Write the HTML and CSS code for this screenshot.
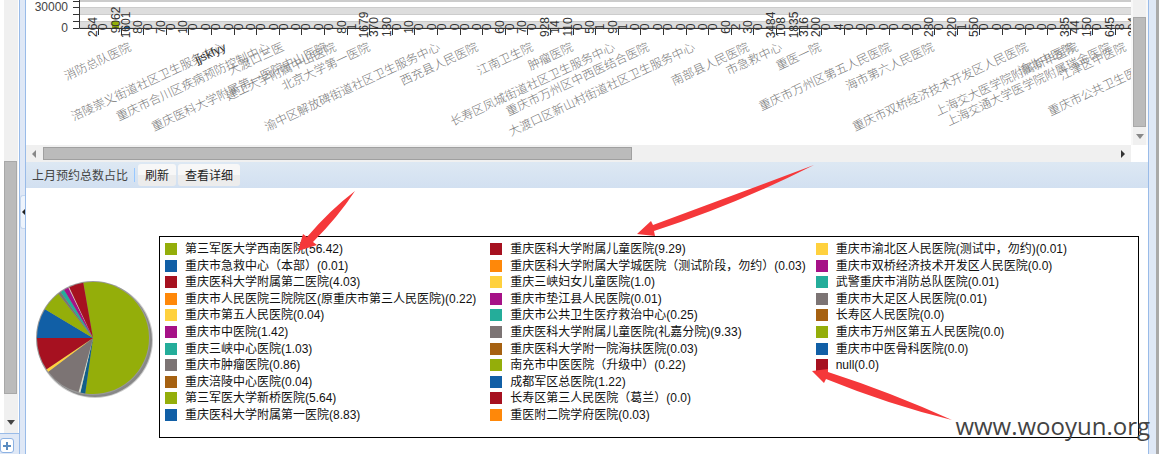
FILE: index.html
```html
<!DOCTYPE html>
<html lang="zh-CN">
<head>
<meta charset="utf-8">
<title>上月预约总数占比</title>
<link rel="stylesheet" href="styles.css">
</head>
<body>
<div class="app">
  <aside class="side">
    <div class="side-scroll">
      <div class="side-thumb"></div>
      <svg class="side-arrow" width="8" height="5"><path d="M0 0h8L4 5z" fill="#444"/></svg>
    </div>
    <div class="side-foot"><button class="plus" aria-label="展开"><svg width="8" height="8"><path d="M4 0v8M0 4h8" stroke="#5b8cc0" stroke-width="2"/></svg></button></div>
  </aside>
  <div class="splitter"><button class="collapse" aria-label="收起"><svg width="3" height="6"><path d="M3 0v6L0 3z" fill="#222"/></svg></button></div>
  <main class="main">
    <section class="chart-panel">
      <div class="chart-row">
        <div class="chart"><svg id="bars" class="bars" width="1105" height="145"></svg></div>
        <div class="vscroll">
          <div class="vthumb"></div>
          <svg width="8" height="5"><path d="M0 0h8L4 5z" fill="#888"/></svg>
        </div>
      </div>
      <div class="hscroll">
        <svg width="4" height="8"><path d="M4 0v8L0 4z" fill="#888"/></svg>
        <div class="htrack"><div class="hthumb"></div></div>
        <svg width="4" height="8"><path d="M0 0v8l4-4z" fill="#333"/></svg>
      </div>
    </section>
    <header class="toolbar">
      <span class="title">上月预约总数占比</span>
      <span class="sep"></span>
      <button class="btn">刷新</button>
      <button class="btn">查看详细</button>
    </header>
    <section class="pie-panel">
      <svg id="pie" class="pie" width="122" height="122" viewBox="-61 -61 122 122"></svg>
      <ul class="legend">
        <li class="green">第三军医大学西南医院(56.42)</li>
        <li class="blue">重庆市急救中心（本部）(0.01)</li>
        <li class="red">重庆医科大学附属第二医院(4.03)</li>
        <li class="orange">重庆市人民医院三院院区(原重庆市第三人民医院)(0.22)</li>
        <li class="yellow">重庆市第五人民医院(0.04)</li>
        <li class="purple">重庆市中医院(1.42)</li>
        <li class="teal">重庆三峡中心医院(1.03)</li>
        <li class="gray">重庆市肿瘤医院(0.86)</li>
        <li class="brown">重庆涪陵中心医院(0.04)</li>
        <li class="green">第三军医大学新桥医院(5.64)</li>
        <li class="blue">重庆医科大学附属第一医院(8.83)</li>
        <li class="red">重庆医科大学附属儿童医院(9.29)</li>
        <li class="orange">重庆医科大学附属大学城医院（测试阶段，勿约）(0.03)</li>
        <li class="yellow">重庆三峡妇女儿童医院(1.0)</li>
        <li class="purple">重庆市垫江县人民医院(0.01)</li>
        <li class="teal">重庆市公共卫生医疗救治中心(0.25)</li>
        <li class="gray">重庆医科大学附属儿童医院(礼嘉分院)(9.33)</li>
        <li class="brown">重庆医科大学附一院海扶医院(0.03)</li>
        <li class="green">南充市中医医院（升级中）(0.22)</li>
        <li class="blue">成都军区总医院(1.22)</li>
        <li class="red">长寿区第三人民医院（葛兰）(0.0)</li>
        <li class="orange">重医附二院学府医院(0.03)</li>
        <li class="yellow">重庆市渝北区人民医院(测试中，勿约)(0.01)</li>
        <li class="purple">重庆市双桥经济技术开发区人民医院(0.0)</li>
        <li class="teal">武警重庆市消防总队医院(0.01)</li>
        <li class="gray">重庆市大足区人民医院(0.01)</li>
        <li class="brown">长寿区人民医院(0.0)</li>
        <li class="green">重庆市万州区第五人民医院(0.0)</li>
        <li class="blue">重庆市中医骨科医院(0.0)</li>
        <li class="red">null(0.0)</li>
      </ul>
    </section>
  </main>
  <div class="edge"></div>
  <svg class="arrows" width="1159" height="454">
    <path d="M298 251L303 234L307 237Q330 210 355 191Q338 217 313 242L317 245Z"/>
    <path d="M637 234L651 221L653 225L814 165Q735 205 654 231L655 236Z"/>
    <path d="M812 371L828 369L828 372Q890 392 952 420Q890 405 826 379L824 383Z"/>
  </svg>
  <div class="watermark">www.wooyun.org</div>
</div>
<script src="chart.js"></script>
</body>
</html>
```

FILE: styles.css
```css
* { box-sizing: border-box; }
body {
  margin: 0;
  font: 12px/16px "Liberation Sans", "Noto Sans CJK SC", sans-serif;
  color: #000;
  background: #fff;
}
button { font: inherit; padding: 0; }
svg { display: block; }

.app { position: relative; display: flex; height: 100vh; overflow: hidden; }

.side { display: flex; flex-direction: column; width: 20px; flex: none; border-right: 1px solid #99bbe8; }
.side-scroll {
  flex: 1; width: 14px; margin-left: 4px; background: #f0f0f0;
  display: flex; flex-direction: column; align-items: center;
  padding: 161px 0 8px;
}
.side-thumb { flex: 1; align-self: stretch; width: 13px; background: #bbb; border: 1px solid #a8a8a8; }
.side-arrow { margin-top: 26px; }
.side-foot { height: 21px; border-top: 1px solid #99bbe8; background: #dfe8f6; padding-top: 4px; }
.plus {
  display: flex; align-items: center; justify-content: center;
  width: 14px; height: 15px; background: #fff; border: 1px solid #8db2e3; border-radius: 3px;
}

.splitter { width: 6px; flex: none; background: #dfe8f6; border-right: 1px solid #99bbe8; padding-top: 195px; }
.collapse {
  display: flex; align-items: center; justify-content: center;
  width: 5px; height: 34px; background: #eef4fc; border: solid #c4d6ee; border-width: 1px 0 1px 1px; border-radius: 3px 0 0 3px;
}

.main { flex: 1; min-width: 0; display: flex; flex-direction: column; }
.chart-row { display: flex; }
.chart { flex: 1; min-width: 0; overflow: hidden; }
.bars { font-size: 12px; }
.place { font-family: "Liberation Serif", "Noto Sans CJK SC", sans-serif; font-weight: 300; }
.vscroll {
  width: 17px; background: #f0f0f0; border-left: 2px solid #f8f8f8; border-right: 2px solid #f8f8f8;
  display: flex; flex-direction: column; align-items: center; padding: 17px 0 6px;
}
.vthumb { flex: 1; align-self: stretch; background: #bbb; border: 1px solid #a8a8a8; margin-bottom: 7px; }
.hscroll {
  height: 17px; margin-right: 17px; padding: 0 6px; background: #f0f0f0;
  display: flex; align-items: center; gap: 7px;
}
.htrack { flex: 1; }
.hthumb { width: 55%; height: 13px; background: #bbb; border: 1px solid #a0a0a0; }

.toolbar {
  display: flex; align-items: center; height: 26px; padding-left: 6px;
  background: linear-gradient(#dde8f3, #d2e0f1);
}
.title { color: #444; margin-right: 6px; padding-top: 2px; }
.sep { width: 1px; height: 14px; background: #98c8ff; margin-right: 3px; }
.btn {
  height: 22px; padding: 2px 7px 0; margin-right: 2px; color: #222;
  background: linear-gradient(#f7f7f7 50%, #ececec 50%); border: 0; border-radius: 3px;
}

.pie-panel { flex: 1; display: flex; align-items: flex-start; padding: 48px 9px 0 6px; }
.pie { flex: none; margin: 41px 5px 0 0; }
.legend {
  flex: 1; min-width: 0; margin: 0; padding: 4px 0 14px 5px; height: 202px; list-style: none;
  border: 1px solid #000;
  display: grid; grid-auto-flow: column; column-gap: 3px;
  grid-template-rows: repeat(11, 1fr); grid-template-columns: repeat(3, 1fr);
}
.legend li { display: flex; align-items: center; gap: 8px; min-width: 0; min-height: 0; white-space: nowrap; color: #111; }
.legend li::before { content: ""; width: 12px; height: 12px; background: currentColor; flex: none; }
.legend .green::before { color: #94ae0a; }
.legend .blue::before { color: #115fa6; }
.legend .red::before { color: #a61120; }
.legend .orange::before { color: #ff8809; }
.legend .yellow::before { color: #ffd13e; }
.legend .purple::before { color: #a61187; }
.legend .teal::before { color: #24ad9a; }
.legend .gray::before { color: #7c7474; }
.legend .brown::before { color: #a66111; }

.edge { width: 11px; flex: none; background: #dfe8f6; border-left: 1px solid #99bbe8; border-right: 3px solid #aaa; }
.arrows { position: absolute; left: 0; top: 0; fill: #f5383a; pointer-events: none; }
.watermark { position: absolute; right: 9px; bottom: 12px; font: 24px/32px "Open Sans", sans-serif; color: #444; }
```

FILE: chart.js
```js
const NS = 'http://www.w3.org/2000/svg';
function add(parent, name, attrs, text) {
  const el = document.createElementNS(NS, name);
  for (const key in attrs) el.setAttribute(key, attrs[key]);
  if (text !== undefined) el.textContent = text;
  parent.appendChild(el);
  return el;
}

// Bar chart
const bars = document.getElementById('bars');
for (const [y, h] of [[0, 2], [7, 8], [21, 7]]) {
  add(bars, 'rect', { x: 54, y: y, width: 1051, height: h, fill: '#ddd' });
  add(bars, 'rect', { x: 54, y: y + h - 1, width: 1051, height: 1, fill: '#ccc' });
  add(bars, 'rect', { x: 54, y: y, width: 1051, height: 1, fill: '#ccc' });
}
add(bars, 'rect', { x: 86, y: 21, width: 7, height: 7, fill: '#94ae0a' });
add(bars, 'rect', { x: 98, y: 27, width: 6, height: 1, fill: '#115fa6' });
add(bars, 'path', { d: 'M53.5 0V28.5H1105M47 1.5h6M47 7.5h6M47 14.5h6M47 21.5h6M47 28.5h6', stroke: '#333', fill: 'none' });
add(bars, 'text', { x: 42, y: 11, 'text-anchor': 'end', fill: '#444' }, '30000');
add(bars, 'text', { x: 42, y: 32, 'text-anchor': 'end', fill: '#444' }, '0');

const pairs = '264,0 9062,1601 80,0 70,0 10,0 0,0 0,0 0,0 0,0 0,0 0,0 80,1 1679,370 130,0 10,0 0,0 0,0 0,0 60,0 70,0 928,14 110,0 50,1 90,1 0,0 0,0 0,0 0,0 60,2 30,0 3484,108 1835,316 200,0 4,0 0,0 0,0 0,0 280,0 220,1 550,0 0,0 0,0 0,0 385,44 150,0 645,8 204';
pairs.split(' ').forEach((pair, i) => {
  const x = Math.round(67 + i * 22.6);
  pair.split(',').forEach((value, j) => {
    const cx = x + j * 10 + 4;
    const cy = value === '9062' ? 20 : value.length === 4 ? 25 : 27;
    add(bars, 'text', { transform: `translate(${cx} ${cy}) rotate(-90)`, 'text-anchor': 'middle', fill: '#333' }, value);
  });
  add(bars, 'path', { d: `M${x + 5.5} 28v7`, stroke: '#333' });
});

const labels = [
  ['消防总队医院', 131], ['涪陵崇义街道社区卫生服务中心', 225], ['jjskfyy', 226],
  ['重庆市合川区疾病预防控制中心', 270], ['大渡口三医', 284],
  ['重庆医科大学附属第一医院中山医院', 327], ['建工大学附属中山医院', 336],
  ['北京大学第一医院', 370], ['渝中区解放碑街道社区卫生服务中心', 440],
  ['西充县人民医院', 478], ['江南卫生院', 533], ['肿瘤医院', 573],
  ['长寿区凤城街道社区卫生服务中心', 615], ['重庆市万州区中西医结合医院', 649],
  ['大渡口区新山村街道社区卫生服务中心', 695], ['南部县人民医院', 749],
  ['市急救中心', 782], ['重医一院', 821], ['重庆市万州区第五人民医院', 891],
  ['海市第六人民医院', 934], ['重庆市双桥经济技术开发区人民医院', 1028],
  ['上海交大医学院附属新华医院', 1078], ['渝北中医院', 1074],
  ['上海交通大学医学院附属瑞金医院', 1111], ['江津区中医院', 1126],
  ['重庆市公共卫生医疗救治中心', 1191]
];
for (const [name, x] of labels) {
  add(bars, 'text', {
    class: 'place',
    transform: `translate(${x - 25} 50) rotate(-25)`,
    'text-anchor': 'end', fill: name === 'jjskfyy' ? '#333' : '#777',
    style: name === 'jjskfyy' ? 'font-family:"Liberation Sans",sans-serif' : ''
  }, name);
}

// Pie chart: colour, start and end in degrees clockwise from the top
const pie = document.getElementById('pie');
for (const [r, fill] of [[58, '#ccc'], [57, '#888']]) {
  add(pie, 'circle', { cx: 2, cy: 2, r: r, fill: fill });
}
add(pie, 'circle', { r: 57, fill: '#999' });
const slices = [
  ['#94ae0a', -10, 188], ['#115f88', 188, 193], ['#d8dccc', 193, 195], ['#7c7474', 195, 233],
  ['#ffd13e', 233, 236], ['#a61120', 236, 270], ['#115fa6', 270, 301], ['#94ae0a', 301, 322],
  ['#7c7474', 322, 325], ['#24ad9a', 325, 329], ['#a61187', 329, 334], ['#e8c0c0', 334, 335], ['#a61120', 335, 350]
];
const point = deg => {
  const a = deg * Math.PI / 180;
  return `${(56 * Math.sin(a)).toFixed(2)} ${(-56 * Math.cos(a)).toFixed(2)}`;
};
for (const [fill, from, to] of slices) {
  add(pie, 'path', { d: `M0 0L${point(from)}A56 56 0 ${to - from > 180 ? 1 : 0} 1 ${point(to)}Z`, fill: fill });
}
```
